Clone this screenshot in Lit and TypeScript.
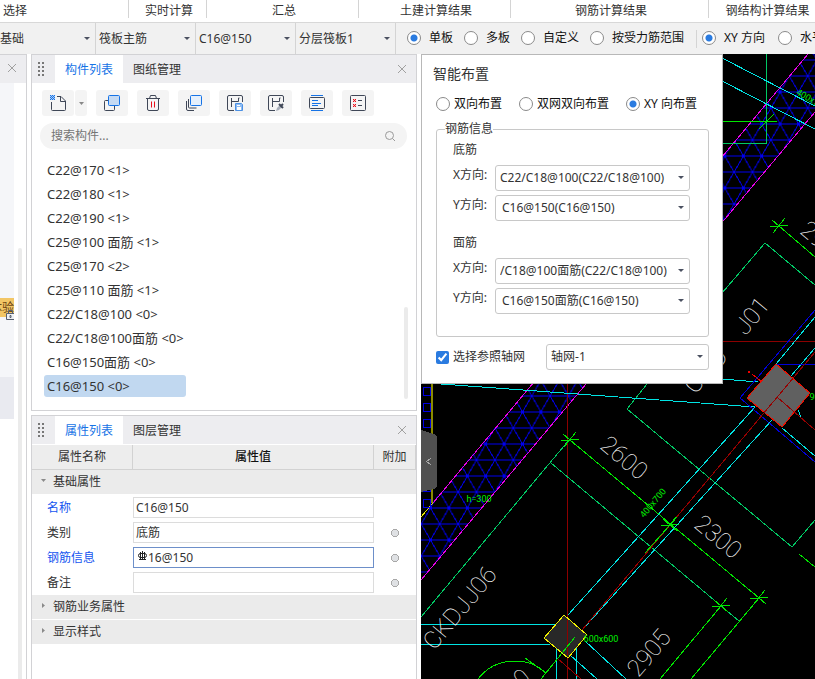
import { LitElement, html, svg, css } from "lit";
import { customElement, property } from "lit/decorators.js";
import { classMap } from "lit/directives/class-map.js";

const shared = css`
  :host {
    box-sizing: border-box;
    font: 12px/16px "Noto Sans", "Noto Sans CJK SC", sans-serif;
    color: #333;
  }
  *,
  *::before,
  *::after {
    box-sizing: border-box;
  }
  button,
  input,
  select {
    font: inherit;
    color: inherit;
    margin: 0;
  }
  button {
    border: 0;
    padding: 0;
    background: none;
  }
  label {
    display: inline-flex;
    align-items: center;
    white-space: nowrap;
  }
  input[type="radio"] {
    appearance: none;
    flex: none;
    width: 14px;
    height: 14px;
    border: 1px solid #8a8a8a;
    border-radius: 50%;
    background: #fff;
  }
  input[type="radio"]:checked {
    background: radial-gradient(circle, #2a7be0 0 3px, #fff 4px);
  }
  .combo {
    position: relative;
    display: flex;
  }
  .combo::after {
    content: "";
    position: absolute;
    right: 5px;
    top: 50%;
    margin-top: -2px;
    border: 3px solid transparent;
    border-top-color: #4a5060;
    border-bottom: 0;
    pointer-events: none;
  }
  .combo select {
    appearance: none;
    width: 100%;
    border: 0;
    background: none;
    outline: 0;
  }
`;

const closeIcon = html`<svg width="10" height="10" viewBox="0 0 10 10" fill="none" stroke="#a0a0a0">
  <path d="M1 1l8 8M9 1l-8 8" />
</svg>`;

@customElement("dock-header")
class DockHeader extends LitElement {
  @property({ type: Array }) tabs: string[] = [];

  static styles = [
    shared,
    css`
      :host {
        display: flex;
        align-items: stretch;
        height: 28px;
        background: #ededf0;
      }
      .grip {
        width: 23px;
        display: flex;
        align-items: center;
        padding-left: 6px;
      }
      .tab {
        padding: 2px 10px 0;
      }
      .active {
        background: #fff;
        color: #1673e6;
      }
      .close {
        margin-left: auto;
        padding: 0 9px;
        display: flex;
        align-items: center;
      }
    `,
  ];

  render() {
    return html`
      <span class="grip">
        <svg width="6" height="14" fill="#777">
          ${[0, 4, 8, 12].map((y) => svg`<rect y=${y} width="2" height="2"/><rect x="4" y=${y} width="2" height="2"/>`)}
        </svg>
      </span>
      ${this.tabs.map((t, i) => html`<button class=${classMap({ tab: true, active: i === 0 })}>${t}</button>`)}
      <button class="close" aria-label="关闭">${closeIcon}</button>
    `;
  }
}

const ink = "#3f4757";
const blue = "#1673e6";
const red = "#e8101c";

const checker = (x: number, y: number, size: number, color: string) => {
  const cells = [];
  for (let r = 0; r < size; r++)
    for (let c = r % 2; c < size; c += 2) cells.push(svg`<rect x=${x + c} y=${y + r} width="1" height="1" fill=${color}/>`);
  return cells;
};

const sheet = svg`<path d="M7 15.500H2q-1.500 0-1.500-1.500V2Q0.500 0.500 2 0.500h12q1.500 0 1.500 1.500v5M4.500 12V3M4.500 6.500h7V3M11.500 3h1" stroke=${ink}/>`;

const toolIcons = [
  svg`<path d="M1.500 7v7.500q0 1 1 1h12q1 0 1-1V6l-4.500-4.500H7M10.500 1.500v5h5" stroke=${ink}/><rect width="5" height="5" fill="#a9cbf5"/>${checker(0, 0, 5, blue)}`,
  svg`<rect x="0.500" y="5.500" width="10" height="10" rx="1" stroke=${ink}/><rect x="4.500" y="0.500" width="11" height="10" rx="1" stroke=${blue} fill="#c5daf3"/>`,
  svg`<path d="M1 3.500h14M2.500 3.500V14q0 1.500 1.500 1.500h8q1.500 0 1.500-1.500V3.500M4.500 3.500l1-3h5l1 3" stroke=${ink}/><path d="M6.500 6.500v6M9.500 6.500v6" stroke=${red}/>`,
  svg`<path d="M0.500 6v8q0 1.500 1.500 1.500h6M2.500 4v8q0 1 1 1h7" stroke=${ink}/><rect x="4.500" y="0.500" width="11" height="10" rx="1" stroke=${blue} fill="#e4effc"/>`,
  svg`${sheet}<path d="M8.500 8.500h6l1 1v6h-7z" stroke="#4b90e4" fill="#8fbcf2"/><path d="M10 12h4v3h-4zM10 10h3v1h-3z" fill="#fff"/>`,
  svg`${sheet}<path d="M8 16l1-3 3-3 2 2-3 3z" fill="#a5acb8"/><path d="M11 9l4 4M13 11l2-2" stroke=${ink} stroke-width="2"/>`,
  svg`<path d="M2 0.500h12M2 15.500h12" stroke=${blue}/><rect x="0.500" y="2.500" width="15" height="11" rx="1" stroke=${ink}/><path d="M3 5.500h6M3 8.500h9M3 10.500h6" stroke=${blue}/>`,
  svg`<rect x="0.500" y="0.500" width="15" height="15" rx="1" stroke=${ink}/><rect x="3" y="4" width="3" height="3" fill="#f7b6ba"/><rect x="3" y="9" width="3" height="3" fill="#f7b6ba"/>${checker(3, 4, 3, red)}${checker(3, 9, 3, red)}<path d="M8 5.500h4M8 10.500h4" stroke=${ink}/>`,
];
const toolNames = ["新建", "复制", "删除", "层间复制", "存档", "提取", "过滤", "检查"];

const components = [
  "C22@170 <1>",
  "C22@180 <1>",
  "C22@190 <1>",
  "C25@100 面筋 <1>",
  "C25@170 <2>",
  "C25@110 面筋 <1>",
  "C22/C18@100 <0>",
  "C22/C18@100面筋 <0>",
  "C16@150面筋 <0>",
  "C16@150 <0>",
];

@customElement("component-panel")
class ComponentPanel extends LitElement {
  static styles = [
    shared,
    css`
      :host {
        display: block;
        border: 1px solid #d2d2d5;
        background: #fff;
      }
      .tools {
        display: flex;
        gap: 9px;
        padding: 7px 10px;
      }
      .tool,
      .more {
        display: flex;
        align-items: center;
        justify-content: center;
        width: 32px;
        height: 26px;
        border-radius: 3px;
        background: #f4f4f4;
      }
      .split {
        display: flex;
        gap: 1px;
      }
      .more {
        width: 12px;
      }
      .search {
        display: flex;
        align-items: center;
        height: 26px;
        margin: 0 9px 0 8px;
        padding: 0 11px;
        border-radius: 13px;
        background: #f4f4f4;
      }
      .search input {
        flex: 1;
        min-width: 0;
        border: 0;
        padding: 0;
        background: none;
        outline: 0;
      }
      .search input::placeholder {
        color: #757575;
      }
      .body {
        display: flex;
        justify-content: space-between;
        padding: 10px 8px 11px 12px;
      }
      ul {
        display: grid;
        gap: 2px;
        list-style: none;
        margin: 0;
        padding: 0 0 2px;
        font-size: 13px;
      }
      li {
        display: flex;
        align-items: center;
        width: 142px;
        height: 22px;
        padding: 0 3px;
        border-radius: 3px;
        white-space: nowrap;
      }
      .selected {
        background: #c1d8f0;
      }
      .thumb {
        align-self: flex-end;
        width: 4px;
        height: 92px;
        border-radius: 2px;
        background: #ebebeb;
      }
    `,
  ];

  tool(i: number) {
    return html`<button class="tool" aria-label=${toolNames[i]}>
      <svg width="16" height="16" viewBox="0 0 16 16" fill="none">${toolIcons[i]}</svg>
    </button>`;
  }

  render() {
    return html`
      <dock-header .tabs=${["构件列表", "图纸管理"]}></dock-header>
      <div class="tools">
        <span class="split">
          ${this.tool(0)}
          <button class="more" aria-label="更多"><svg width="5" height="3"><path d="M0 0h5L2.500 3z" fill="#888" /></svg></button>
        </span>
        ${[1, 2, 3, 4, 5, 6, 7].map((i) => this.tool(i))}
      </div>
      <div class="search">
        <input type="text" aria-label="搜索构件" placeholder="搜索构件..." />
        <svg width="12" height="12" viewBox="0 0 12 12" fill="none" stroke="#9a9a9a">
          <circle cx="5.500" cy="5.500" r="4" /><path d="M8.500 8.500l2.500 2.500" />
        </svg>
      </div>
      <div class="body">
        <ul>
          ${components.map((c, i) => html`<li class=${classMap({ selected: i === components.length - 1 })}>${c}</li>`)}
        </ul>
        <span class="thumb"></span>
      </div>
    `;
  }
}

const props = [
  { name: "名称", value: "C16@150", link: true, extra: false },
  { name: "类别", value: "底筋", link: false, extra: true },
  { name: "钢筋信息", value: "16@150", link: true, extra: true },
  { name: "备注", value: "", link: false, extra: true },
];

@customElement("property-panel")
class PropertyPanel extends LitElement {
  static styles = [
    shared,
    css`
      :host {
        display: block;
        border: 1px solid #d2d2d5;
        border-bottom: 0;
        background: #fff;
      }
      table {
        width: 100%;
        margin-top: 1px;
        border-collapse: separate;
        border-spacing: 0;
        table-layout: fixed;
      }
      .c-name {
        width: 101px;
      }
      .c-extra {
        width: 42px;
      }
      th,
      td {
        height: 25px;
        padding: 0;
        font-weight: 400;
        text-align: left;
      }
      thead th {
        background: #ededed;
        border-right: 1px solid #d2d2d2;
        border-bottom: 1px solid #d2d2d2;
        text-align: center;
      }
      thead .strong {
        font-weight: 500;
        color: #111;
      }
      .group th {
        background: #ebebeb;
        border-bottom: 1px solid #fff;
        padding-left: 9px;
      }
      .group svg {
        margin-right: 7px;
        vertical-align: 3px;
      }
      tbody .name {
        padding-left: 15px;
      }
      .link {
        color: #1455f0;
      }
      .field {
        display: flex;
        align-items: center;
        height: 21px;
        border: 1px solid #dcdcdc;
        padding: 0 2px;
      }
      .field:has(.rebar) {
        border-color: #6d8fc9;
      }
      .rebar {
        flex: none;
        margin: 0 1px 4px 2px;
      }
      .field input {
        flex: 1;
        min-width: 0;
        border: 0;
        padding: 0;
        background: none;
        outline: 0;
      }
      .dot {
        width: 20px;
        height: 8px;
        display: block;
        margin: 0 auto;
        background: radial-gradient(circle, #dfe1e4 0 3px, #a8a8a8 3px 4px, transparent 4px);
      }
    `,
  ];

  group(name: string, open: boolean) {
    return html`<tr class="group">
      <th colspan="3">
        <svg width="5" height="5" viewBox="0 0 5 5" fill="#8a8a8a"><path d=${open ? "M0 1h5L2.500 4z" : "M1 0v5l3-2.500z"} /></svg
        >${name}
      </th>
    </tr>`;
  }

  render() {
    return html`
      <dock-header .tabs=${["属性列表", "图层管理"]}></dock-header>
      <table>
        <colgroup>
          <col class="c-name" />
          <col />
          <col class="c-extra" />
        </colgroup>
        <thead>
          <tr>
            <th>属性名称</th>
            <th class="strong">属性值</th>
            <th>附加</th>
          </tr>
        </thead>
        <tbody>
          ${this.group("基础属性", true)}
          ${props.map(
            (p, i) => html`<tr>
              <td class="name">
                <label class=${classMap({ link: p.link })} for="prop-${i}">${p.name}</label>
              </td>
              <td>
                <span class="field">
                  ${i === 2
                    ? html`<svg class="rebar" width="9" height="10" viewBox="0 0 9 10" fill="none" stroke="#222">
                        <rect x="0.500" y="2.500" width="8" height="4" rx="2" />
                        <path d="M4.500 0v9M2.500 1v7M6.500 1v7M1 8.500h7" />
                      </svg>`
                    : ""}
                  <input id="prop-${i}" type="text" .value=${p.value} />
                </span>
              </td>
              <td>${p.extra ? html`<span class="dot"></span>` : ""}</td>
            </tr>`
          )}
          ${this.group("钢筋业务属性", false)} ${this.group("显示样式", false)}
        </tbody>
      </table>
    `;
  }
}

const star = (x: number, y: number) =>
  svg`<path d="M${x - 9} ${y + 1}l18-2M${x - 7} ${y - 6}l14 12M${x + 6} ${y - 8}l-12 15" stroke="#00e600"/>`;

const label = (x: number, y: number, angle: number, text: string, cls: string) =>
  svg`<text class=${cls} text-anchor="middle" dominant-baseline="central" transform="translate(${x} ${y}) rotate(${angle})">${text}</text>`;

@customElement("drawing-view")
class DrawingView extends LitElement {
  static styles = css`
    :host {
      display: block;
      overflow: hidden;
      background: #000;
    }
    svg {
      display: block;
      width: 100%;
      height: 100%;
      shape-rendering: crispEdges;
    }
    text {
      stroke: none;
    }
    .dim {
      font: 100 24px Roboto, sans-serif;
      fill: #fff;
    }
    .tag {
      font: 9px Roboto, sans-serif;
      fill: #00f000;
    }
  `;

  render() {
    return html`<svg fill="none" role="img" aria-label="平面图">
      <defs>
        <pattern id="mesh" width="18.400" height="32" patternUnits="userSpaceOnUse" patternTransform="translate(476.500 459.500)">
          <path d="M0 0.500h18.400M0 16.500h18.400M0 0.500l18.400 32M18.400 0.500L0 32.500" stroke="#0000f0" />
        </pattern>
      </defs>
      <g transform="translate(-421 -54)">
        <path d="M808 54H864L815 112L421 580V516z" fill="url(#mesh)" />
        <path d="M808 54L433 503M864 54L815 112L421 580" stroke="#e800e8" />
        <path d="M433 503L421 517" stroke="#e8e800" />
        <path d="M432 384V503" stroke="#8a8a00" stroke-width="2" />
        ${[387, 403, 419, 483, 499].map((y) => svg`<rect x="423.500" y=${y + 0.5} width="7" height="8" stroke="#0000e0"/>`)}

        <path d="M567.500 384V679M722 341.500H815" stroke="#8c0000" />
        <g stroke="#00c864">
          <path d="M766.500 54V143.500H722" />
          <path d="M722 293L765 243L815 285M647 384L627 409L792 547L815 520" />
          <path d="M421 617L569 440M551 463L739 621" />
        </g>
        <g stroke="#00e600">
          <path d="M722 121.500H777M759 129L774 114M779 226L815 257" />
          <path d="M570 440L759 598L691 679M721 606L660 679M799 554L815 567" />
          <path d="M478 679Q492 661 515 661Q534 661 546 673M525 658L546 673" />
        </g>
        ${star(779, 226)} ${star(570, 440)} ${star(670, 525)} ${star(759, 598)} ${star(721, 606)}

        <g stroke="#00e4e4">
          <path d="M722 58L815 106M722 81L815 129" />
          <path d="M441 384L755 407M722 379L758 382" />
          <path d="M568 615L755 407M582 630L772 420M782 428L815 456" />
          <path d="M776 364L815 317M791 376L815 348" />
          <path d="M421 624.500H557M421 644.500H550" />
          <path d="M556 646L557 679M576 646L577 679M585 641L626 679M570 655L597 679" />
        </g>
        <path d="M815 310L740 398L815 462M776 364.500H815" stroke="#0000d8" />
        <path d="M776 364L810 393L782 427L747 398z" fill="#606060" stroke="#f01000" />
        <path d="M815 352L582 630M777 397L815 430M557 658L581 679" stroke="#960000" />
        <path d="M677 517L645 553" stroke="#00e600" />
        <circle cx="749" cy="372" r="1" stroke="#f00000" />
        <path d="M752 374L762 382" stroke="#f00000" />
        <path d="M798 410L801 417" stroke="#00e4e4" />

        <path d="M564 615L587 635L568 658L544 638z" fill="#282828" stroke="#f0f000" />
        <path d="M567.500 620V655" stroke="#8c0000" />
        <path d="M575 637L541 679" stroke="#00e600" />

        ${label(624, 458, 40, "2600", "dim")} ${label(718, 537, 40, "2300", "dim")}
        ${label(649, 653, -50, "2905", "dim")} ${label(460, 608, -50, "CKDJJ06", "dim")}
        ${label(752, 316, -50, "J01", "dim")} ${label(694, 384, -50, "C", "dim")}
        ${label(718, 358, -50, "D", "dim")} ${label(824, 243, 40, "2900", "dim")}
        ${label(515, 684, -40, "8.0", "dim")}
        ${label(479, 499, 0, "h=300", "tag")} ${label(601, 639, 0, "600x600", "tag")}
        ${label(653, 503, -50, "400x700", "tag")} ${label(812, 100, 30, "400x700", "tag")}
        ${label(817, 397, 0, "900", "tag")}

        <path d="M421 430L434 434Q437 435 437 438V485Q437 488 434 489L421 492z" fill="#505050" />
        <path d="M431 458L426.500 461.500L431 465" stroke="#aaa" />
      </g>
    </svg>`;
  }
}

@customElement("layout-dialog")
class LayoutDialog extends LitElement {
  static styles = [
    shared,
    css`
      :host {
        display: block;
        padding: 9px 13px 13px 11px;
        border: 1px solid #b8b8b8;
        background: #fff;
      }
      h2 {
        margin: 0;
        font-size: 14px;
        line-height: 20px;
        font-weight: 400;
      }
      .modes {
        display: flex;
        gap: 17px;
        margin: 12px 0 0 3px;
        color: #111;
      }
      .modes label {
        gap: 4px;
      }
      fieldset {
        min-width: 0;
        height: 216px;
        margin: 9px 0 7px 3px;
        padding: 5px 18px 0 16px;
        border: 1px solid #c8c8c8;
        border-radius: 3px;
      }
      legend {
        margin-left: -8px;
        padding: 0;
      }
      .caption {
        margin: 0 0 7px;
      }
      .caption + .grid + .caption {
        margin-top: 14px;
      }
      .grid {
        display: grid;
        grid-template-columns: 42px 1fr;
        row-gap: 4px;
      }
      .grid label {
        align-items: flex-start;
        padding-top: 2px;
      }
      .box {
        height: 26px;
        border: 1px solid #c8c8c8;
        border-radius: 3px;
      }
      .box select {
        padding: 0 16px 0 6px;
      }
      .box.wide select {
        padding: 0 0 0 4px;
      }
      .foot {
        display: flex;
        align-items: center;
        gap: 21px;
        margin-left: 3px;
      }
      .foot label {
        gap: 4px;
      }
      .foot .box {
        flex: 1;
      }
      input[type="checkbox"] {
        width: 13px;
        height: 13px;
        accent-color: #2a7be0;
      }
    `,
  ];

  row(id: string, name: string, value: string, wide: boolean) {
    return html`<label for=${id}>${name}</label>
      <span class=${classMap({ combo: true, box: true, wide })}>
        <select id=${id}>
          <option>${value}</option>
        </select>
      </span>`;
  }

  render() {
    return html`
      <h2>智能布置</h2>
      <div class="modes">
        ${["双向布置", "双网双向布置", "XY 向布置"].map(
          (m, i) => html`<label><input type="radio" name="mode" ?checked=${i === 2} />${m}</label>`
        )}
      </div>
      <fieldset>
        <legend>钢筋信息</legend>
        <p class="caption">底筋</p>
        <div class="grid">
          ${this.row("bottom-x", "X方向:", "C22/C18@100(C22/C18@100)", true)}
          ${this.row("bottom-y", "Y方向:", "C16@150(C16@150)", false)}
        </div>
        <p class="caption">面筋</p>
        <div class="grid">
          ${this.row("top-x", "X方向:", "/C18@100面筋(C22/C18@100)", true)}
          ${this.row("top-y", "Y方向:", "C16@150面筋(C16@150)", false)}
        </div>
      </fieldset>
      <div class="foot">
        <label><input type="checkbox" checked />选择参照轴网</label>
        <span class="combo box wide">
          <select aria-label="轴网">
            <option>轴网-1</option>
          </select>
        </span>
      </div>
    `;
  }
}

@customElement("app-root")
class AppRoot extends LitElement {
  static styles = [
    shared,
    css`
      :host {
        display: flex;
        flex-direction: column;
        height: 100vh;
        overflow: hidden;
        background: #fff;
      }
      .ribbon {
        display: grid;
        grid-template-columns: 129px 78px 152px 152px 198px minmax(118px, 1fr);
        height: 22px;
        flex: none;
      }
      .ribbon span {
        height: 18px;
        padding: 3px 0 0 3px;
        border-right: 1px solid #d4d4d4;
        text-align: center;
      }
      .ribbon span:first-child {
        text-align: left;
      }
      .ribbon span:last-child {
        padding-left: 0;
      }
      .options {
        display: flex;
        align-items: center;
        flex: none;
        height: 32px;
        border-top: 1px solid #d8d8d8;
        background: #f1f1f1;
        overflow: hidden;
      }
      .pick {
        flex: none;
        width: 100px;
        height: 100%;
        border-right: 1px solid #d4d4d4;
      }
      .pick:first-child {
        width: 96px;
      }
      .pick select {
        padding: 0 0 0 3px;
      }
      .pick:first-child select {
        padding: 0;
      }
      .radios {
        display: flex;
        gap: 11px;
        flex: none;
        padding: 0 12px 2px 11px;
        color: #111;
      }
      .radios label {
        gap: 8px;
      }
      .radios + .radios {
        gap: 13px;
        padding-left: 5px;
        border-left: 1px solid #d4d4d4;
      }
      .work {
        display: grid;
        grid-template-columns: 27px 386px 1fr;
        gap: 4px;
        flex: 1;
        min-height: 0;
      }
      .side {
        display: flex;
        flex-direction: column;
        border: 1px solid #d2d2d5;
        border-width: 1px 1px 0 0;
        overflow: hidden;
      }
      .side header {
        display: flex;
        align-items: center;
        height: 28px;
        padding-left: 7px;
        background: #ededf0;
      }
      .nav {
        display: flex;
        justify-content: space-between;
        flex: 1;
        padding-right: 4px;
      }
      .nav-items {
        display: flex;
        flex-direction: column;
        width: 14px;
        height: 336px;
        background: #f5f6f9;
      }
      .badge {
        display: flex;
        justify-content: flex-end;
        align-items: center;
        position: relative;
        height: 19px;
        margin-top: 215px;
        background: #f2c666;
        color: #6b4310;
        white-space: nowrap;
      }
      .badge svg {
        position: absolute;
        right: 0;
        bottom: -3px;
      }
      .current {
        height: 42px;
        margin-top: auto;
        background: #e9eaf0;
      }
      .track {
        width: 4px;
        margin-top: 165px;
        border-radius: 2px 2px 0 0;
        background: #ebebeb;
      }
      .docks {
        display: flex;
        flex-direction: column;
        gap: 4px;
        min-height: 0;
      }
      property-panel {
        flex: 1;
      }
      .stage {
        display: grid;
        position: relative;
        min-width: 0;
        overflow: hidden;
      }
      layout-dialog {
        position: absolute;
        left: 0;
        top: 0;
        width: 302px;
      }
    `,
  ];

  render() {
    const picks = ["基础", "筏板主筋", "C16@150", "分层筏板1"];
    return html`
      <div class="ribbon">
        ${["选择", "实时计算", "汇总", "土建计算结果", "钢筋计算结果", "钢结构计算结果"].map((t) => html`<span>${t}</span>`)}
      </div>
      <div class="options">
        ${picks.map(
          (p) => html`<span class="combo pick"><select aria-label=${p}><option>${p}</option></select></span>`
        )}
        <div class="radios">
          ${["单板", "多板", "自定义", "按受力筋范围"].map(
            (t, i) => html`<label><input type="radio" name="range" ?checked=${i === 0} />${t}</label>`
          )}
        </div>
        <div class="radios">
          ${["XY 方向", "水平"].map(
            (t, i) => html`<label><input type="radio" name="direction" ?checked=${i === 0} />${t}</label>`
          )}
        </div>
      </div>
      <div class="work">
        <aside class="side">
          <header><button aria-label="关闭">${closeIcon}</button></header>
          <div class="nav">
            <div class="nav-items">
              <span class="badge"
                >体验<svg width="8" height="11" viewBox="0 0 8 11" fill="#eef0f3" stroke="#566072">
                  <path d="M2.500 4V1.500h4V4" fill="none" /><path d="M0.500 4.500h8v6h-8zM4 6.500h1v2H4z" /></svg
              ></span>
              <span class="current"></span>
            </div>
            <span class="track"></span>
          </div>
        </aside>
        <div class="docks">
          <component-panel></component-panel>
          <property-panel></property-panel>
        </div>
        <main class="stage">
          <drawing-view></drawing-view>
          <layout-dialog></layout-dialog>
        </main>
      </div>
    `;
  }
}
